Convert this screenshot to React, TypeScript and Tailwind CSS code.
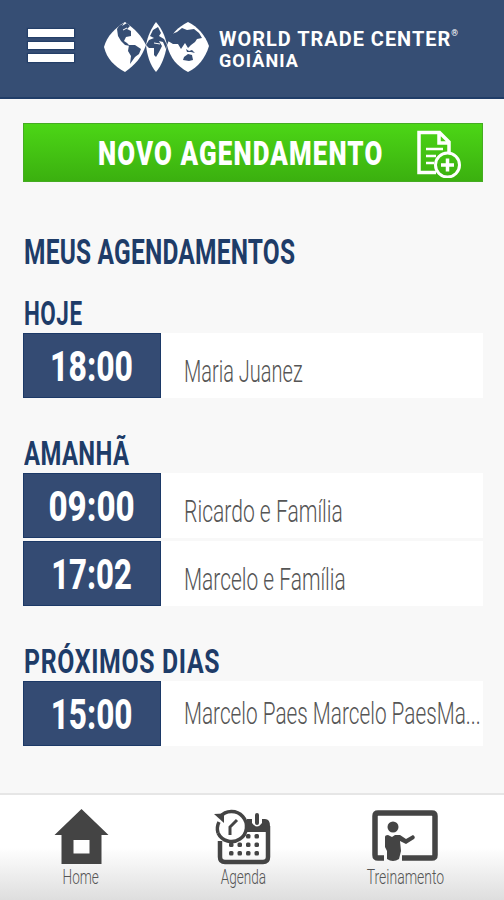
import type { ReactNode } from "react";

type Booking = { time: string; name: string; timeScale: string; nameScale: string; raised?: boolean };
type Section = { title: string; scale: string; space: string; items: Booking[] };

const sections: Section[] = [
  {
    title: "HOJE", scale: "scale-x-[0.66] tracking-[0.8px]", space: "mt-[28px]",
    items: [{ time: "18:00", name: "Maria Juanez", timeScale: "scale-x-[0.76]", nameScale: "scale-x-[0.645]" }],
  },
  {
    title: "AMANHÃ", scale: "scale-x-[0.7] tracking-[0.6px]", space: "mt-[37px]",
    items: [
      { time: "09:00", name: "Ricardo e Família", timeScale: "scale-x-[0.79]", nameScale: "scale-x-[0.68]" },
      { time: "17:02", name: "Marcelo e Família", timeScale: "scale-x-[0.74]", nameScale: "scale-x-[0.675]" },
    ],
  },
  {
    title: "PRÓXIMOS DIAS", scale: "scale-x-[0.73] tracking-[0.9px]", space: "mt-[37px]",
    items: [{ time: "15:00", name: "Marcelo Paes Marcelo PaesMa...", timeScale: "scale-x-[0.75]", nameScale: "scale-x-[0.67]", raised: true }],
  },
];

function Header() {
  return (
    <header className="flex h-[99px] shrink-0 items-start border-b-2 border-[#203d68] bg-[#364e74]">
      <button aria-label="Menu" className="ml-7 mt-[29px] flex flex-col gap-[5px]">
        {[0, 1, 2].map(i => <span key={i} className="h-[7.500px] w-[46px] bg-white shadow-[0_0_1px_1px_#243f68]" />)}
      </button>
      <svg className="ml-[30px] mt-[21px] h-[52px] w-[106px] shrink-0" viewBox="0 0 106 52">
        <g fill="#fff">
          <path d="M21 1C31 8 37 14 42 24C38 36 31 44 21 51C10 45 3 38 0 26C3 15 11 7 21 1Z" />
          <path d="M52 1C58 8 61 15 63 24C61 35 58 44 52 51C46 44 43 34 42 24C44 14 47 8 52 1Z" />
          <path d="M84 1C94 6 101 14 105 25C101 38 94 46 84 51C73 45 66 37 63 24C67 13 74 6 84 1Z" />
        </g>
        <g fill="#364e74">
          <path d="M15 5L20 2L18 5L23 2L26 5L23 8L27 10L27 15L22 16L20 20L23 22L26 25L21 24L17 20L14 15L13 8Z" />
          <path d="M25 24L31 24L37 28L35 33L31 36L26 43L27 35L24 30Z" />
          <path d="M49 9L54 6L57 12L55 15L60 18L63 24L62 28L59 21L55 20L58 25L55 31L52 36L50 34L50 27L45 27L42 24L45 19L50 17L46 15Z" />
          <path d="M64 20L68 13L73 11L78 7L83 9L90 8L95 12L98 17L93 18L91 21L87 24L84 27L81 22L77 28L74 23L69 23Z" />
          <path d="M80 36L84 33L88 34L89 39L85 40L79 39Z" />
          <path d="M82 28L85 30L88 29L91 32L87 31L83 31Z" />
        </g>
        <path d="M19 9L23 7M50 22L56 23" stroke="#fff" strokeWidth="1" />
      </svg>
      <div className="ml-[9px] mt-[27px] font-['Roboto'] font-bold text-white">
        <div className="flex h-6 origin-left scale-x-[0.95] items-center whitespace-nowrap text-[21px] leading-6 tracking-[1.050px]">
          WORLD TRADE CENTER<sup className="top-[-6px] text-[9px] tracking-normal">®</sup>
        </div>
        <div className="h-5 w-max origin-left scale-x-[0.95] whitespace-nowrap text-[19px] leading-5 tracking-[1.100px]">GOIÂNIA</div>
      </div>
    </header>
  );
}

function NewBooking() {
  return (
    <button className="flex h-[59px] w-full items-center border border-[#45ac22] bg-linear-to-b from-[#4cd616] to-[#3bb00f] pl-[74px] text-white">
      <span className="w-[318px] origin-left scale-x-[0.76] whitespace-nowrap text-left font-['Roboto'] text-[34px] font-black leading-none tracking-[1.500px]">NOVO AGENDAMENTO</span>
      <svg className="h-[50px] w-[46px] shrink-0" viewBox="0 0 46 50" fill="none" stroke="#fff" strokeWidth="3.500">
        <path d="M20 44.500H3V4.500H23.500L33 14V25M23 5V15H33" />
        <path d="M10 21H27M10 28H20M10 35H18" strokeWidth="2.500" />
        <circle cx="31.500" cy="37" r="12" strokeWidth="3" />
        <path d="M25 37H38M31.500 30.500V43.500" />
      </svg>
    </button>
  );
}

function Row({ item }: { item: Booking }) {
  return (
    <div className="flex h-[65px] bg-white">
      <div className="flex w-[138px] items-center justify-center border border-[#1c3967] bg-[#344b73] pt-[3px]">
        <span className={`${item.timeScale} font-['Roboto'] text-[42px] font-extrabold leading-none text-white`}>{item.time}</span>
      </div>
      <div className={`flex flex-1 items-center pl-[23px] ${item.raised ? "" : "pt-3"}`}>
        <span className={`${item.nameScale} w-0 origin-left whitespace-nowrap font-['Roboto'] text-[31px] font-light leading-none text-[#555]`}>{item.name}</span>
      </div>
    </div>
  );
}

function HomeIcon() {
  return (
    <svg className="h-[57px] w-[56px]" viewBox="0 0 56 57">
      <path fill="#444" fillRule="evenodd" d="M28.500 0L55.500 26H48.500V55H8.500V26H1.500ZM20.500 31V44.500H36.500V31Z" />
    </svg>
  );
}

function AgendaIcon() {
  return (
    <svg className="h-[57px] w-[58px]" viewBox="0 0 58 57" fill="none" stroke="#444" strokeWidth="3.500">
      <path d="M6 32V48Q6 53 11 53H49Q54 53 54 48V17" strokeWidth="4.500" />
      <path fill="#444" stroke="none" d="M33 10H38V14Q43 21 48 14V10H51Q56 10 56 17V23H33Z" />
      <path d="M43 6V14" strokeWidth="4" strokeLinecap="round" />
      <path d="M6 8A15 15 0 1 1 4 24" />
      <path d="M4 24A15 15 0 0 1 5 13" />
      <path fill="#444" stroke="none" d="M0 5L10 4.500V14Z" />
      <path d="M16 26V18L23 11" strokeWidth="3" />
      <g fill="#444" stroke="none">
        {[27, 35.5, 44].map(y => [17, 25.5, 34, 42.5].map(x => (
          (y > 30 || x > 30) && <rect key={`${x}-${y}`} x={x - 2} y={y - 2} width="4.500" height="4.500" rx="1.500" />
        )))}
      </g>
    </svg>
  );
}

function TrainingIcon() {
  return (
    <svg className="h-[57px] w-[66px]" viewBox="0 0 66 57">
      <path d="M12 49H6Q3 49 3 46V7Q3 4 6 4H60Q63 4 63 7V46Q63 49 60 49H30" fill="none" stroke="#444" strokeWidth="5.500" />
      <g fill="#444">
        <circle cx="21" cy="18" r="5.500" />
        <path d="M16 26L20 28L23 26L28 26L34 30L41 26Q44 28 42 30L34 35L28 32L29 42L27 50Q21 54 15 50V42L13 38V28Q13 26 16 26Z" />
      </g>
    </svg>
  );
}

function Tab({ label, scale, children }: { label: string; scale: string; children: ReactNode }) {
  return (
    <button className="flex w-[162px] flex-col items-center pt-[14px] text-[#555]">
      {children}
      <span className={`${scale} whitespace-nowrap font-['Roboto'] text-[20px] font-light leading-[23px]`}>{label}</span>
    </button>
  );
}

export default function App() {
  return (
    <div className="flex h-[900px] w-[504px] flex-col overflow-hidden bg-[#f8f8f8]">
      <Header />
      <main className="flex-1 pl-[23px] pr-[21px] pt-6">
        <NewBooking />
        <h1 className="ml-px mt-[53px] h-8 w-max origin-left scale-x-[0.7] whitespace-nowrap font-['Roboto'] text-[35px] font-bold leading-9 tracking-[0.300px] text-[#1e3c68]">MEUS AGENDAMENTOS</h1>
        {sections.map(s => (
          <section key={s.title} className={s.space}>
            <h2 className={`${s.scale} ml-px h-[38px] w-max origin-left whitespace-nowrap font-['Roboto'] text-[34px] font-bold leading-9 text-[#1e3c68]`}>{s.title}</h2>
            <div className="flex flex-col gap-[3px]">
              {s.items.map(b => <Row key={b.time} item={b} />)}
            </div>
          </section>
        ))}
      </main>
      <nav className="flex h-[107px] shrink-0 border-t-2 border-[#e6e6e6] bg-linear-to-b from-white from-50% to-[#dedede]">
        <Tab label="Home" scale="scale-x-[0.68]"><HomeIcon /></Tab>
        <Tab label="Agenda" scale="scale-x-[0.68]"><AgendaIcon /></Tab>
        <Tab label="Treinamento" scale="scale-x-[0.7]"><TrainingIcon /></Tab>
      </nav>
    </div>
  );
}
